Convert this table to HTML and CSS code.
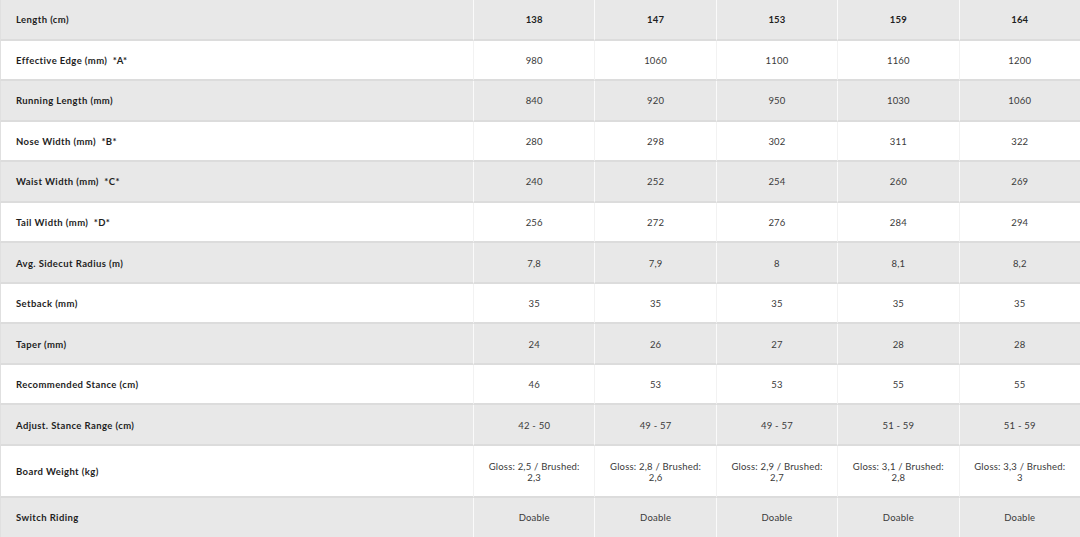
FILE: index.html
```html
<!DOCTYPE html>
<html>
<head>
<meta charset="utf-8">
<link rel="stylesheet" href="styles.css">
</head>
<body>
<table class="specs">
  <colgroup><col class="c-label"><col><col><col><col><col></colgroup>
  <tbody>
    <tr class="r grey"><th>Length (cm)</th><td class="b">138</td><td class="b">147</td><td class="b">153</td><td class="b">159</td><td class="b">164</td></tr>
    <tr class="r"><th>Effective Edge (mm)&nbsp; *A*</th><td>980</td><td>1060</td><td>1100</td><td>1160</td><td>1200</td></tr>
    <tr class="r grey"><th>Running Length (mm)</th><td>840</td><td>920</td><td>950</td><td>1030</td><td>1060</td></tr>
    <tr class="r"><th>Nose Width (mm)&nbsp; *B*</th><td>280</td><td>298</td><td>302</td><td>311</td><td>322</td></tr>
    <tr class="r grey"><th>Waist Width (mm)&nbsp; *C*</th><td>240</td><td>252</td><td>254</td><td>260</td><td>269</td></tr>
    <tr class="r"><th>Tail Width (mm)&nbsp; *D*</th><td>256</td><td>272</td><td>276</td><td>284</td><td>294</td></tr>
    <tr class="r grey"><th>Avg. Sidecut Radius (m)</th><td>7,8</td><td>7,9</td><td>8</td><td>8,1</td><td>8,2</td></tr>
    <tr class="r"><th>Setback (mm)</th><td>35</td><td>35</td><td>35</td><td>35</td><td>35</td></tr>
    <tr class="r grey"><th>Taper (mm)</th><td>24</td><td>26</td><td>27</td><td>28</td><td>28</td></tr>
    <tr class="r"><th>Recommended Stance (cm)</th><td>46</td><td>53</td><td>53</td><td>55</td><td>55</td></tr>
    <tr class="r grey"><th>Adjust. Stance Range (cm)</th><td>42 - 50</td><td>49 - 57</td><td>49 - 57</td><td>51 - 59</td><td>51 - 59</td></tr>
    <tr class="r tall"><th>Board Weight (kg)</th><td>Gloss: 2,5 / Brushed: 2,3</td><td>Gloss: 2,8 / Brushed: 2,6</td><td>Gloss: 2,9 / Brushed: 2,7</td><td>Gloss: 3,1 / Brushed: 2,8</td><td>Gloss: 3,3 / Brushed: 3</td></tr>
    <tr class="r grey"><th>Switch Riding</th><td>Doable</td><td>Doable</td><td>Doable</td><td>Doable</td><td>Doable</td></tr>
  </tbody>
</table>
</body>
</html>
```

FILE: styles.css
```css
html, body {
  margin: 0;
  padding: 0;
  background: #ffffff;
}
body {
  font-family: Lato, "Open Sans", sans-serif;
  color: #2a2a2a;
}
.specs {
  width: 1080px;
  table-layout: fixed;
  border-collapse: separate;
  border-spacing: 0;
}
.c-label {
  width: 473px;
}
.specs th,
.specs td {
  height: 37.55px;
  padding: 1px 12px 0;
  border-bottom: 2px solid #dcdcdc;
  border-left: 1px solid #f2f2f2;
  font-size: 9.5px;
  line-height: 11px;
  vertical-align: middle;
}
.specs th {
  text-align: left;
  font-weight: 700;
  color: #1e1e1e;
  padding-left: 15px;
  letter-spacing: 0.4px;
  border-left: 1px solid #e0e0e0;
}
.specs td {
  text-align: center;
  font-weight: 400;
  color: #3a3a3a;
  letter-spacing: 0.2px;
}
.specs td.b {
  font-weight: 700;
  color: #1e1e1e;
}
.grey th,
.grey td {
  background: #e8e8e8;
}
.grey td {
  border-left: 1px solid #fafafa;
}
.tall th,
.tall td {
  height: 49px;
}
```
